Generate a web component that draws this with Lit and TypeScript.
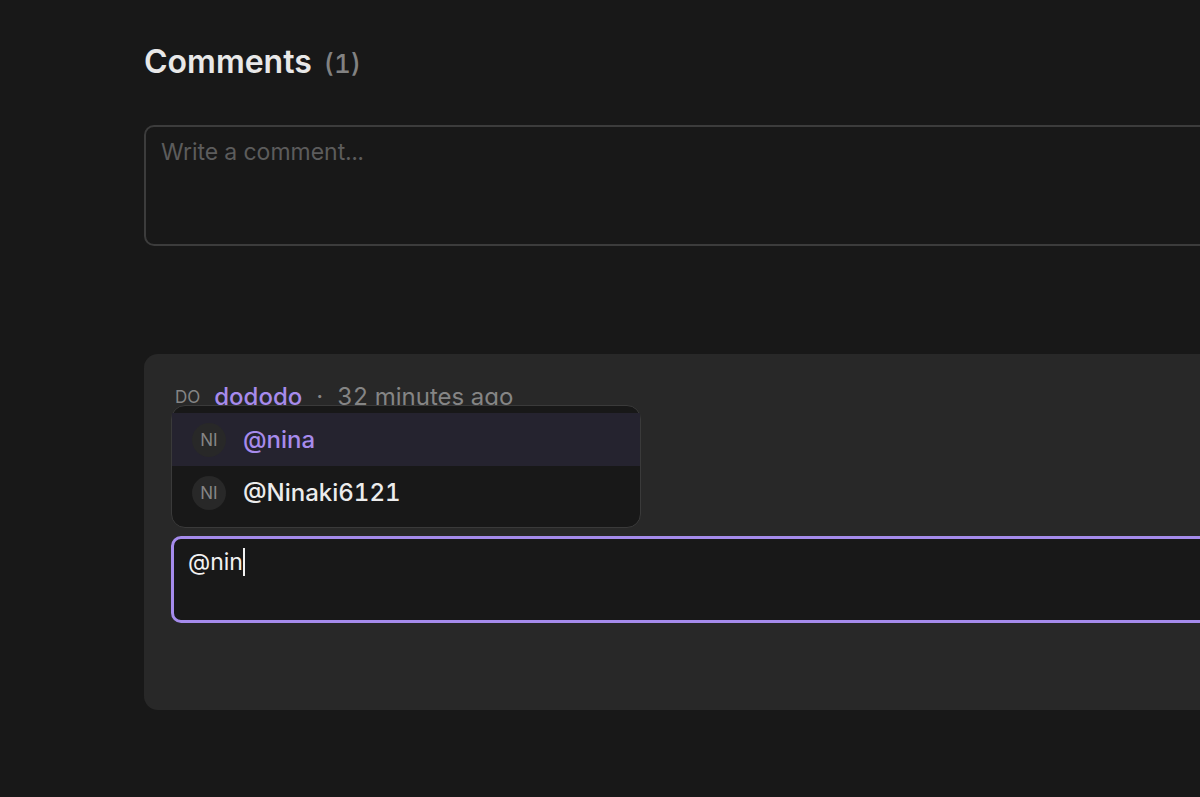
import { LitElement, html, css } from "lit";
import { customElement, state } from "lit/decorators.js";

interface Person {
  initials: string;
  handle: string;
}

@customElement("app-root")
export class AppRoot extends LitElement {
  @state() private people: Person[] = [
    { initials: "NI", handle: "@nina" },
    { initials: "NI", handle: "@Ninaki6121" },
  ];

  @state() private selected = 0;

  static styles = css`
    :host {
      display: block;
      min-height: 100vh;
      overflow: hidden;
      background: #181818;
      color: #e8e8e8;
      font-family: Inter, "Liberation Sans", sans-serif;
      font-size: 24px;
      line-height: 32px;
      font-variant-numeric: tabular-nums;
    }
    *,
    *::before {
      box-sizing: border-box;
    }
    .comments {
      margin-right: -56px;
      padding: 40px 0 86px 144px;
    }
    .title {
      display: flex;
      align-items: baseline;
      gap: 12px;
      margin: 0 0 41px;
      font-size: 32px;
      line-height: 44px;
      font-weight: 600;
    }
    .count {
      color: #828282;
      font-size: 26px;
      font-weight: 500;
      line-height: 32px;
    }
    .field {
      display: block;
      width: 100%;
      margin: 0;
      resize: none;
      outline: none;
      background: #181818;
      color: #f2f2f2;
      font: inherit;
      font-size: 23px;
    }
    .field::placeholder {
      color: #5c5c5c;
      opacity: 1;
    }
    .new {
      height: 121px;
      padding: 9px 15px;
      border: 2px solid #3c3c3c;
      border-radius: 10px;
    }
    .card {
      margin-top: 108px;
      padding: 27px 27px 87px;
      border-radius: 14px;
      background: #282828;
    }
    .meta {
      display: flex;
      align-items: center;
      gap: 14px;
      padding-left: 4px;
      color: #858585;
    }
    .initials {
      font-size: 17px;
    }
    .author {
      color: #a78bec;
      font-weight: 500;
      text-decoration: none;
    }
    .reply {
      position: relative;
      margin-top: 123px;
    }
    .answer {
      height: 87px;
      padding: 7px 14px;
      border: 3px solid #a58bec;
      border-radius: 10px;
      caret-color: transparent;
    }
    .caret {
      position: absolute;
      top: 12px;
      left: 72px;
      width: 2px;
      height: 28px;
      background: #f2f2f2;
    }
    .menu {
      position: absolute;
      bottom: calc(100% + 8px);
      left: 0;
      width: 470px;
      margin: 0;
      padding: 7px 0 8px;
      border: 1px solid #3a3a3a;
      border-radius: 14px;
      background: #181818;
    }
    .option {
      display: flex;
      align-items: center;
      gap: 17px;
      width: 100%;
      height: 53px;
      padding: 0 20px;
      border: 0;
      background: none;
      color: #ececec;
      font: inherit;
      font-variant-numeric: tabular-nums;
      font-weight: 500;
      text-align: left;
    }
    .option[aria-selected="true"] {
      background: #25232f;
      color: #a78bec;
    }
    .avatar {
      width: 34px;
      height: 34px;
      border-radius: 50%;
      background: #282828;
      color: #858585;
      font-size: 17px;
      font-weight: 400;
      line-height: 34px;
      text-align: center;
    }
  `;

  render() {
    return html`
      <main class="comments">
        <h1 class="title">Comments <span class="count">(1)</span></h1>
        <textarea
          class="field new"
          aria-label="Write a comment"
          placeholder="Write a comment..."
        ></textarea>
        <article class="card">
          <header class="meta">
            <span class="initials">DO</span>
            <a class="author" href="#dododo">dododo</a>
            <span>·</span>
            <time>32 minutes ago</time>
          </header>
          <div class="reply">
            <textarea class="field answer" aria-label="Reply" .value=${"@nin"}></textarea>
            <span class="caret"></span>
            <div class="menu" role="listbox" aria-label="People">
              ${this.people.map(
                (person, index) => html`
                  <button
                    class="option"
                    role="option"
                    aria-selected=${index === this.selected ? "true" : "false"}
                    @mouseenter=${() => (this.selected = index)}
                  >
                    <span class="avatar">${person.initials}</span>
                    <span>${person.handle}</span>
                  </button>
                `
              )}
            </div>
          </div>
        </article>
      </main>
    `;
  }
}
